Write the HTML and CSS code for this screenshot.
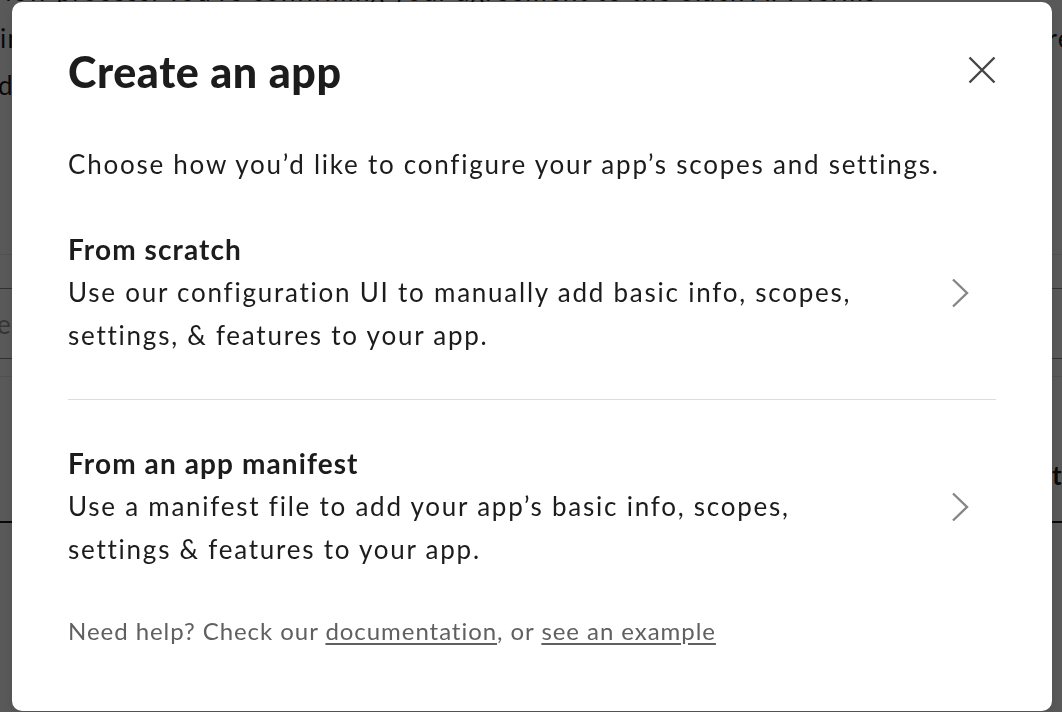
FILE: index.html
```html
<!DOCTYPE html>
<html lang="en">
<head>
    <meta charset="UTF-8">
    <meta name="viewport" content="width=device-width, initial-scale=1.0">
    <title>Create an app</title>
    <link rel="stylesheet" href="styles.css">
</head>
<body>
    <div class="page">
        <div class="page-text">
            <p class="line-1">the App Directory or review process. You’re confirming your agreement to the Slack API Terms</p>
            <p class="line-2">in the workspace you pick, and you can distribute it to other workspaces later, they're</p>
            <p class="line-3">d by the workspace admins before going live.</p>
        </div>
        <div class="row row-a"></div>
        <div class="row row-b"></div>
        <div class="row row-c"><span class="placeholder">e</span></div>
        <div class="row row-d"></div>
        <div class="row row-e"><span class="page-strong">to</span></div>
    </div>

    <div class="overlay"></div>

    <div class="modal" role="dialog" aria-labelledby="modal-title">
        <div class="modal-header">
            <h1 id="modal-title">Create an app</h1>
            <button class="close" aria-label="Close">
                <svg width="28" height="28" viewBox="0 0 28 28">
                    <path d="M1.5 1.5 L26.5 26.5 M26.5 1.5 L1.5 26.5" />
                </svg>
            </button>
        </div>

        <p class="intro">Choose how you’d like to configure your app’s scopes and settings.</p>

        <div class="options">
            <button class="option">
                <div class="option-text">
                    <div class="option-title">From scratch</div>
                    <div class="option-desc">Use our configuration UI to manually add basic info, scopes, settings, &amp; features to your app.</div>
                </div>
                <svg class="chevron" width="18" height="30" viewBox="0 0 18 30">
                    <path d="M2 1.5 L16 15 L2 28.5" />
                </svg>
            </button>
            <button class="option">
                <div class="option-text">
                    <div class="option-title">From an app manifest</div>
                    <div class="option-desc">Use a manifest file to add your app’s basic info, scopes, settings &amp; features to your app.</div>
                </div>
                <svg class="chevron" width="18" height="30" viewBox="0 0 18 30">
                    <path d="M2 1.5 L16 15 L2 28.5" />
                </svg>
            </button>
        </div>

        <p class="help">Need help? Check our <a href="#">documentation</a>, or <a href="#">see an example</a></p>
    </div>
</body>
</html>
```

FILE: styles.css
```css
body {
    margin: 0;
    background: #fff;
    font-family: Lato, "Noto Sans", sans-serif;
    color: #1d1c1d;
    overflow: hidden;
}
.page {
    height: 712px;
    overflow: hidden;
    font-size: 26px;
    letter-spacing: 1.2px;
}
.page-text {
    margin-top: -32px;
    line-height: 47px;
}
.page-text p {
    margin: 0;
    white-space: nowrap;
}
.line-1 {
    margin-left: -300px !important;
}
.line-3 {
    margin-left: -2px !important;
}
.row {
    box-sizing: border-box;
}
.row-a {
    height: 146px;
    border-bottom: 1px solid #e8e8e8;
}
.row-b {
    height: 34px;
    border-bottom: 1px solid #8c8c8c;
}
.row-c {
    height: 70px;
    border-bottom: 1px solid #8c8c8c;
    line-height: 70px;
}
.placeholder {
    color: #9a9a9a;
    margin-left: -3px;
}
.row-d {
    height: 18px;
    border-bottom: 1px solid #e8e8e8;
}
.row-e {
    height: 146px;
    border-bottom: 2px solid #1d1c1d;
    padding: 82px 0 0 1052px;
    white-space: nowrap;
}
.page-strong {
    font-weight: 700;
}
.overlay {
    position: fixed;
    inset: 0;
    background: rgba(0, 0, 0, 0.65);
}
.modal {
    position: fixed;
    left: 12px;
    top: 2px;
    width: 1040px;
    height: 709px;
    box-sizing: border-box;
    padding: 45px 56px 0;
    background: #fff;
    border-radius: 10px;
    box-shadow: 0 4px 12px rgba(0, 0, 0, 0.12);
}
.modal-header {
    display: flex;
    justify-content: space-between;
    align-items: flex-start;
}
h1 {
    margin: 0;
    font-size: 43px;
    line-height: 50px;
    font-weight: 900;
    letter-spacing: 0.6px;
}
.close {
    margin-top: 9px;
    padding: 0;
    border: none;
    background: none;
    cursor: pointer;
    line-height: 0;
}
.close path {
    stroke: #454545;
    stroke-width: 2.4;
    fill: none;
}
.intro {
    margin: 46px 0 0;
    font-size: 26px;
    line-height: 43px;
    letter-spacing: 1.76px;
}
.option {
    display: flex;
    align-items: center;
    width: 100%;
    padding: 42px 0;
    border: none;
    background: none;
    font: inherit;
    color: inherit;
    text-align: left;
    cursor: pointer;
}
.option + .option {
    border-top: 1px solid #dddddd;
}
.option-text {
    flex: 1;
    font-size: 26px;
    line-height: 43px;
    letter-spacing: 1.76px;
}
.option-title {
    font-size: 28px;
    font-weight: 700;
    letter-spacing: 1.1px;
}
.option-desc {
    max-width: 800px;
}
.chevron {
    margin-right: 27px;
}
.chevron path {
    stroke: #868686;
    stroke-width: 2.4;
    fill: none;
}
.help {
    margin: 0;
    font-size: 24px;
    line-height: 36px;
    letter-spacing: 0.95px;
    color: #616061;
}
.help a {
    color: #616061;
    text-decoration: underline;
    text-underline-offset: 3px;
}
```
